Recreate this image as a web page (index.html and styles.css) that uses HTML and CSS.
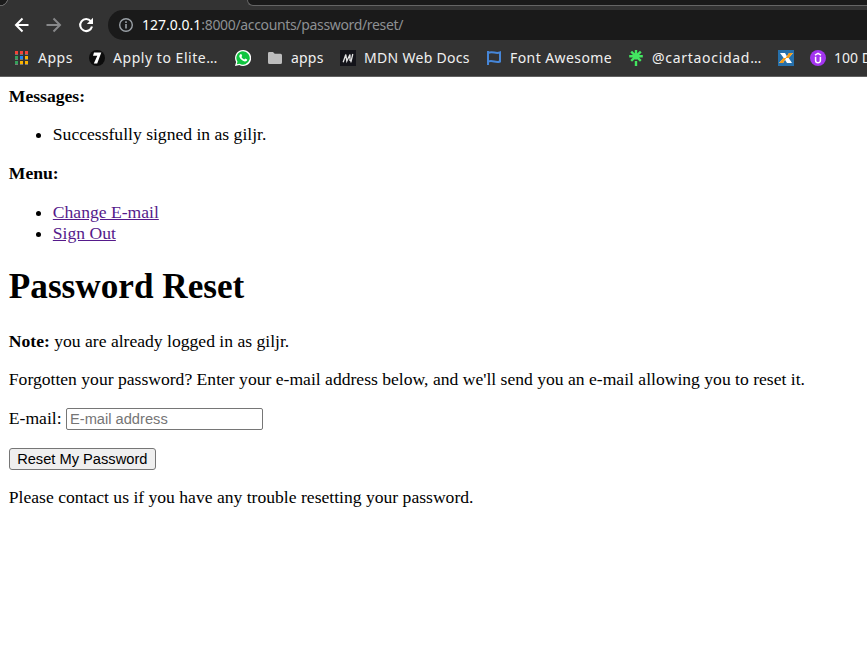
FILE: index.html
```html
<!DOCTYPE html>
<html lang="en">
<head>
<meta charset="utf-8">
<title>Password Reset</title>
<link rel="stylesheet" href="styles.css">
</head>
<body>
<header class="browser">
  <div class="tabs"><div class="tab-active"></div><div class="tab-rest"></div></div>
  <div class="toolbar">
    <svg class="nav" width="16" height="16" viewBox="0 0 16 16"><path d="M14.500 8H2.500M8.500 1.500L2 8l6.500 6.500" fill="none" stroke="#fff" stroke-width="2"/></svg>
    <svg class="nav" width="16" height="16" viewBox="0 0 16 16"><path d="M.5 8H13.500M7.500 1.500L14 8l-6.500 6.500" fill="none" stroke="#87888a" stroke-width="2"/></svg>
    <svg class="nav" width="16" height="16" viewBox="0 0 16 16"><path d="M12.800 4.200A6 6 0 1 0 14 9.600" fill="none" stroke="#fff" stroke-width="2.100"/><path d="M15 .8V7H8.800z" fill="#fff"/></svg>
    <div class="address">
      <svg width="16" height="16" viewBox="0 0 16 16"><circle cx="8" cy="8" r="6.300" fill="none" stroke="#9aa0a6" stroke-width="1.400"/><path d="M8 7v4.500M8 4.300v1.600" stroke="#9aa0a6" stroke-width="1.600"/></svg>
      <span class="url"><b>127.0.0.1</b>:8000/accounts/password/reset/</span>
    </div>
  </div>
  <nav class="bookmarks">
    <a class="bm apps-grid"><svg width="16" height="16" viewBox="0 0 16 16"><path d="M1 1h3v3H1zM6 1h3v3H6zM11 1h3v3h-3z" fill="#f44336"/><path d="M1 6h3v3H1zM1 11h3v3H1z" fill="#34a05a"/><path d="M6 6h3v3H6z" fill="#2386f3"/><path d="M11 6h3v3h-3zM6 11h3v3H6zM11 11h3v3h-3z" fill="#fbb300"/><path d="M1 4.500h3m2 0h3m2 0h3M1 9.500h3m2 0h3m2 0h3M1 14.500h3m2 0h3m2 0h3" stroke="#777" stroke-width="1"/></svg><span>Apps</span></a>
    <a class="bm elite"><svg width="16" height="16" viewBox="0 0 16 16"><circle cx="8" cy="8" r="8" fill="#0c0c0c"/><path d="M5 2.500h7.300L8.200 13.500H4.800L8.300 5.800H4z" fill="#fff"/></svg><span>Apply to Elite…</span></a>
    <a class="bm whatsapp"><svg width="16" height="16" viewBox="0 0 16 16"><path d="M8 0a8 8 0 1 1-3.700 15L0 16l1.100-4A8 8 0 0 1 8 0z" fill="#fff"/><path d="M8 1.300a6.700 6.700 0 1 1-3.500 12.400l-2.700.6.700-2.600A6.700 6.700 0 0 1 8 1.300z" fill="#10c540"/><path d="M5.300 4.200l1-.1.900 2-.8 1c.7 1.300 1.600 2 2.900 2.500l.9-1.100 2 1c0 1.400-1.200 2-2.400 1.900-2.600-.5-4.900-2.600-5.500-4.900-.1-.9.300-1.800 1-2.300z" fill="#fff"/></svg></a>
    <a class="bm folder"><svg width="16" height="16" viewBox="0 0 16 16"><path d="M2.200 2H6l1.700 1.800h5.800Q15 3.800 15 5.300v7.200Q15 14 13.500 14h-11Q1 14 1 12.500V3.300Q1 2 2.200 2z" fill="#bdbdbd"/></svg><span>apps</span></a>
    <a class="bm mdn"><svg width="16" height="16" viewBox="0 0 16 16"><path d="M0 0h16v16H0z" fill="#14141a"/><path d="M3.200 12.300L5.800 4.500l1 6.500L10 4.500v6.500M10.800 12.300L12.800 4" fill="none" stroke="#e4e4e4" stroke-width="1.300"/></svg><span>MDN Web Docs</span></a>
    <a class="bm awesome"><svg width="16" height="16" viewBox="0 0 16 16"><path d="M2 1v14" stroke="#4686d8" stroke-width="2"/><path d="M2 3c4.500-2.400 7.500 1.300 12-.6v9.100c-4.500 1.800-7.500-1.900-12 .2" fill="none" stroke="#4686d8" stroke-width="2"/></svg><span>Font Awesome</span></a>
    <a class="bm linktree"><svg width="16" height="16" viewBox="0 0 16 16"><path d="M8 0v9.500M1.200 6.300h13.600M3.200 1.700l9.600 9.200M12.800 1.700l-9.600 9.200M8 11v5" stroke="#43e660" stroke-width="2.400"/></svg><span>@cartaocidad…</span></a>
    <a class="bm xp"><svg width="16" height="16" viewBox="0 0 16 16"><path d="M0 0h16v16H0z" fill="#2670ab"/><path d="M2 3h5l2 3.500L11 3h4l-4.300 5L14 13H9L7 9.800 5 13H1l4.700-5z" fill="#fff"/><path d="M11 3h4l-4.300 5H7.500zM5.300 8h3L5 13H1z" fill="#f39b17"/></svg></a>
    <a class="bm udemy"><svg width="16" height="16" viewBox="0 0 16 16"><circle cx="8" cy="8" r="8" fill="#a435f0"/><path d="M5 5.200l3-1.900 3 1.900M5.600 6.800v3.700c0 3 4.800 3 4.800 0V6.800" fill="none" stroke="#fff" stroke-width="1.500"/></svg><span>100 D</span></a>
  </nav>
</header>
<main class="page">
  <div><strong>Messages:</strong>
    <ul><li>Successfully signed in as giljr.</li></ul>
  </div>
  <div><strong>Menu:</strong>
    <ul><li><a class="link" href="#">Change E-mail</a></li><li><a class="link" href="#">Sign Out</a></li></ul>
  </div>
  <h1>Password Reset</h1>
  <p><strong>Note:</strong> you are already logged in as giljr.</p>
  <p>Forgotten your password? Enter your e-mail address below, and we'll send you an e-mail allowing you to reset it.</p>
  <form>
    <p><label for="email">E-mail:</label> <input id="email" type="email" placeholder="E-mail address"></p>
    <button type="button">Reset My Password</button>
  </form>
  <p>Please contact us if you have any trouble resetting your password.</p>
</main>
</body>
</html>
```
FILE: styles.css
```css
* { box-sizing: border-box; }
body {
  margin: 0;
  background: #fff;
  color: #000;
  overflow: hidden;
  font: 17.6px/21px "Liberation Serif", serif;
}
.browser {
  height: 77px;
  background: #333;
  border-bottom: 1px solid #606060;
  overflow: hidden;
  font-family: "Noto Sans", sans-serif;
}
.tabs { display: flex; height: 10px; }
.tab-active {
  width: 247px;
  height: 6px;
  background: radial-gradient(circle at 0 -2px, #1b1b1b 0 7px, #666 7.5px 8px, #333 8.5px);
}
.tab-rest {
  flex: 1;
  height: 6px;
  background: #1a1a1a;
  border-bottom: 1px solid #656565;
  border-left: 1px solid #656565;
  border-bottom-left-radius: 7px;
}
.toolbar { display: flex; align-items: center; height: 30px; padding-left: 14px; }
.nav { flex: none; margin-right: 16px; }
.address {
  flex: 1;
  display: flex;
  align-items: center;
  height: 30px;
  margin-left: -2px;
  padding-left: 10px;
  background: #1a1a1a;
  border-radius: 15px 0 0 15px;
}
.url {
  margin-left: 8px;
  padding-bottom: 2px;
  font-size: 14px;
  letter-spacing: -0.34px;
  color: #8d9093;
  white-space: nowrap;
}
.url b { font-weight: 400; letter-spacing: 0; color: #fff; }
.bookmarks { display: flex; height: 36px; padding-left: 14px; }
.bm { flex: none; display: flex; align-items: center; color: #f0f0f0; font-size: 14px; white-space: nowrap; }
.bm svg { flex: none; margin-right: 8px; }
.bm span { padding-bottom: 2px; }
.apps-grid { width: 75px; letter-spacing: 0.5px; }
.elite { width: 146px; letter-spacing: 0.54px; }
.whatsapp { width: 32px; }
.folder { width: 73px; letter-spacing: 0.2px; }
.mdn { width: 146px; letter-spacing: 0.3px; }
.awesome { width: 142px; letter-spacing: 0.42px; }
.linktree { width: 150px; letter-spacing: 0.7px; }
.xp { width: 32px; }
.page { display: flow-root; padding: 8.8px 8.8px 0; }
ul { margin: 17.6px 0; padding-left: 44px; }
.link { color: #551a8b; }
h1 { margin: 23.6px 0; font-size: 35.2px; line-height: 40px; }
p { margin: 17.6px 0; }
input {
  width: 197px;
  height: 22px;
  padding: 1px 3px;
  border: 1px solid #767676;
  border-radius: 2px;
  font: 14.667px "Liberation Sans", sans-serif;
}
input::placeholder { color: #757575; }
button {
  display: block;
  width: 147px;
  height: 22px;
  padding: 0;
  background: #efefef;
  color: #000;
  border: 1px solid #767676;
  border-radius: 3px;
  font: 14.667px "Liberation Sans", sans-serif;
}
```
